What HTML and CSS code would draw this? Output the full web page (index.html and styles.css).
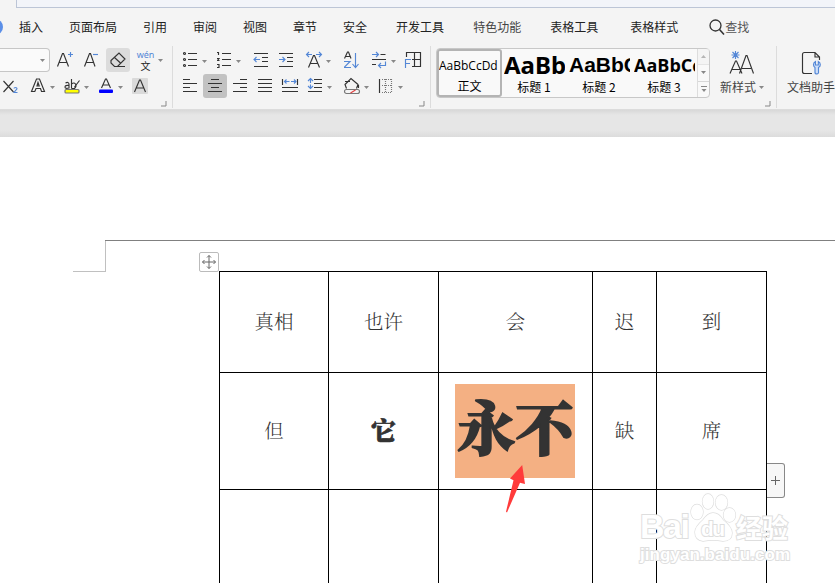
FILE: index.html
```
<!DOCTYPE html>
<html lang="zh-CN">
<head>
    <meta charset="UTF-8">
    <meta name="viewport" content="width=device-width, initial-scale=1.0">
    <title>文档</title>
    <link rel="stylesheet" href="styles.css">
</head>
<body>
    <div class="title-strip"></div>
    <nav class="tabs">
        <span class="tab-dot"></span>
        <span class="tab">插入</span>
        <span class="tab">页面布局</span>
        <span class="tab">引用</span>
        <span class="tab">审阅</span>
        <span class="tab">视图</span>
        <span class="tab">章节</span>
        <span class="tab">安全</span>
        <span class="tab wide">开发工具</span>
        <span class="tab wide soft">特色功能</span>
        <span class="tab wide">表格工具</span>
        <span class="tab wider">表格样式</span>
        <span class="search">
            <svg width="17" height="18" class="icon"><circle cx="7.500" cy="7.500" r="5.500" stroke-width="1.300"/><path d="M11.500 11.500l4.500 5" stroke-width="1.600"/></svg>
            查找
        </span>
    </nav>

    <div class="ribbon">
        <!-- Font -->
        <div class="group font-group">
            <div class="row">
                <div class="size-box"><svg width="5" height="3" class="arrow"><path d="M0 0h5l-2.500 3z"/></svg></div>
                <svg width="28" height="24" class="icon"><path d="M7.500 18.500l5-13h1l5 13M9.500 14.500h8"/><path class="blue" d="M18 6.500h5M20.500 4v5"/></svg>
                <svg width="28" height="24" class="icon"><path d="M6.500 18.500l5-13h1l4.500 13M8.500 14.500h7"/><path class="blue" d="M15 6.500h5"/></svg>
                <div class="btn light">
                    <svg width="24" height="24" class="icon"><path d="M5 12.500l8-7.500 6 6-7.500 7.500H8.500L5 15zM8.500 9.500l6.500 6M9 18.500h10"/></svg>
                </div>
                <div class="pinyin"><span class="wen">wén</span><span class="zi">文</span></div>
                <svg width="5" height="3" class="arrow"><path d="M0 0h5l-2.500 3z"/></svg>
            </div>
            <div class="row">
                <svg width="30" height="24" class="icon"><path d="M3.500 7l10 11M13.500 7l-10 11"/><path class="blue" d="M14 14.500q0-1 1.500-1t1.500 1.300L14 18.500h3.500"/></svg>
                <svg width="34" height="24" class="icon"><path d="M1.500 17.500L6.500 5h3l5 12.500h-3l-1-3H6l-1.200 3zM7 12l1-3.500L9.200 12z"/><path class="tri" d="M20 12h5l-2.500 3z"/></svg>
                <svg width="34" height="24" class="icon"><path d="M1.500 9q3-1.500 3.500 1v4.500M5 11.500q-4-.5-4 1.500t4 1M7.500 5v9.500M7.500 10q2.500-2 4 0t-1 4.500h-3M10.500 13l5-6.500"/><rect class="mark" x="1" y="15.500" width="14" height="3.500" rx="1"/><path class="tri" d="M20 12h5l-2.500 3z"/></svg>
                <svg width="34" height="24" class="icon"><path d="M3.500 14l4-9h1l4 9M5 11h6"/><rect class="ink" x="1" y="15.500" width="14" height="3.500" rx="1"/><path class="tri" d="M20 12h5l-2.500 3z"/></svg>
                <svg width="18" height="24" class="icon"><rect class="shade" x="0" y="4" width="16" height="16" rx="1"/><path d="M2.500 18l5-12h1l5 12M4.500 14h7"/></svg>
            </div>
            <svg width="6" height="6" class="launcher"><path d="M5 0v5H0"/></svg>
        </div>

        <!-- Paragraph -->
        <div class="group para-group">
            <div class="row">
                <svg width="34" height="24" class="icon"><circle cx="1.500" cy="5.500" r="1"/><circle cx="1.500" cy="11.500" r="1"/><circle cx="1.500" cy="17.500" r="1"/><path d="M5 5.500h9M5 11.500h9M5 17.500h9"/><path class="tri" d="M19 12h5l-2.500 3z"/></svg>
                <svg width="36" height="24" class="icon"><path d="M0 4.500h1.500V7M0 10.500h2l-1.500 2h2M0 16.500h2v3H0M5 5.500h9M5 11.500h9M5 17.500h9"/><path class="tri" d="M19 12h5l-2.500 3z"/></svg>
                <svg width="25" height="24" class="icon"><path d="M1 5.500h14M9 9.500h6M9 13.500h6M1 18.500h14"/><path class="blue" d="M1 11.500h6M3.500 9L1 11.500 3.500 14"/></svg>
                <svg width="27" height="24" class="icon"><path d="M1 5.500h14M9 9.500h6M9 13.500h6M1 18.500h14"/><path class="blue" d="M1 11.500h6M4.500 9L7 11.500 4.500 14"/></svg>
                <svg width="39" height="24" class="icon"><path d="M3.500 19.500l5-12h1l5 12M5.500 15.500h7"/><path class="blue" d="M1.500 6.500H7M11 6.500h5.500M4 4L1.500 6.500 4 9M14 4l2.500 2.500L14 9"/><path class="tri" d="M21 12h5l-2.500 3z"/></svg>
                <svg width="27" height="24" class="icon"><path d="M.5 10.500L3.500 4h1L7 10.500M1.500 8.500h4.500"/><path class="blue" d="M0 13.500h6l-6 6h7M11.500 5v14M8.500 16l3 3.500 3-3.500"/></svg>
                <svg width="33" height="24" class="icon"><path d="M9.500 6.500h5M1 11.500h14M1 16.500h4"/><path class="blue" d="M1 6.500h6M5 4l2.500 2.500L5 9M14.500 13.500v4H8M10 15l-2.500 2.500L10 20"/><path class="tri" d="M20 12h5l-2.500 3z"/></svg>
                <svg width="20" height="24" class="icon"><path d="M2.500 9V4.500h14v14H8M10.500 4.500v14M8 11.500h8"/><path class="blue" d="M1.500 20v-8.500H7M1.500 15.500H6"/></svg>
            </div>
            <div class="row">
                <svg width="20" height="24" class="icon"><path d="M0 5.500h7M0 9.500h14M0 13.500h7M0 17.500h14"/></svg>
                <div class="btn dark">
                    <svg width="24" height="24" class="icon"><path d="M8 5.500h8M5 9.500h14M8 13.500h8M5 17.500h14"/></svg>
                </div>
                <svg width="30" height="24" class="icon"><path d="M13 5.500h7M6 9.500h14M13 13.500h7M6 17.500h14"/></svg>
                <svg width="24" height="24" class="icon"><path d="M1 5.500h14M1 9.500h14M1 13.500h14M1 17.500h14"/></svg>
                <svg width="26" height="24" class="icon"><path d="M1.500 5v6M16.500 5v6M1 13.500h16M1 17.500h16"/><path class="blue" d="M3.500 7.500h5M10 7.500h5M5.500 5.500l-2 2 2 2M13 5.500l2 2-2 2"/></svg>
                <svg width="36" height="24" class="icon"><path d="M7 5.500h8M7 9.500h8M7 13.500h8M1 17.500h14"/><path class="blue" d="M3.500 4.500v4.500M3.500 10.500v4M1 7l2.500-2.500L6 7M1 12l2.500 2.500L6 12"/><path class="tri" d="M20 12h5l-2.500 3z"/></svg>
                <svg width="35" height="24" class="icon"><path d="M2 7.500h5M3.500 14.500L2 10.500l6-6 7 6-1.500 4M15.500 11v3"/><rect class="none" x="1.500" y="15.500" width="15" height="4" rx="2"/><path class="red" d="M7.500 19l5-3"/><path class="tri" d="M21 12h5l-2.500 3z"/></svg>
                <svg width="26" height="24" class="icon"><path d="M1.500 5v14"/><path class="dots" d="M4 5.500h10M4 11.500h10M4 18.500h10M7.500 5v14M13.500 5v14"/><path class="tri" d="M20 12h5l-2.500 3z"/></svg>
            </div>
            <svg width="6" height="6" class="launcher"><path d="M5 0v5H0"/></svg>
        </div>

        <!-- Styles -->
        <div class="group style-group">
            <div class="gallery">
                <div class="style-card selected"><span class="sample">AaBbCcDd</span><span class="name">正文</span></div>
                <div class="style-card"><span class="sample h1">AaBb</span><span class="name">标题 1</span></div>
                <div class="style-card"><span class="sample h2">AaBbC</span><span class="name">标题 2</span></div>
                <div class="style-card"><span class="sample h3">AaBbCc</span><span class="name">标题 3</span></div>
                <div class="scroller">
                    <span class="step off"><svg width="5" height="3" class="arrow"><path d="M0 3h5L2.500 0z"/></svg></span>
                    <span class="step"><svg width="5" height="3" class="arrow"><path d="M0 0h5l-2.500 3z"/></svg></span>
                    <span class="step"><svg width="6" height="6" class="arrow"><path d="M0 0h6v1H0zM.5 3h5L3 6z"/></svg></span>
                </div>
            </div>
            <div class="big-btn">
                <svg width="28" height="26" class="icon"><path d="M2 23.500L7.500 11h1l5.500 12.500M4 19.500h8.500M11.500 23.500L18 5.500h1l6.500 18M14 18.500h9"/><path class="blue" d="M7.500 1v8M3.500 5h8M4.500 2l6 6M10.500 2l-6 6"/></svg>
                <span class="label">新样式<svg width="5" height="3" class="arrow"><path d="M0 0h5l-2.500 3z"/></svg></span>
            </div>
            <svg width="6" height="6" class="launcher"><path d="M5 0v5H0"/></svg>
        </div>

        <div class="group help-group">
            <div class="big-btn">
                <svg width="24" height="26" class="icon"><path d="M13 23.500H5.500q-2 0-2-2v-17q0-2 2-2H16l4.500 4.500V10M16 2.500V7h4.500"/><path class="wrench" d="M16.500 11.500q-2 1-2 3.200 0 1.800 1.500 2.800v5.500q1.800 2 3.500 0v-5.500q1.800-1 1.800-2.800 0-2.200-2-3.200V15h-2.800z"/></svg>
                <span class="label">文档助手</span>
            </div>
        </div>
    </div>

    <div class="gutter"></div>

    <main class="page">
        <div class="margin-corner"></div>
        <div class="margin-top"></div>
        <div class="move-handle">
            <svg width="18" height="18"><path d="M9 2.500v13M2.500 9h13M7 4.500l2-2 2 2M7 13.500l2 2 2-2M4.500 7l-2 2 2 2M13.500 7l2 2-2 2"/></svg>
        </div>
        <table class="doc-table">
            <colgroup><col class="c1"><col class="c2"><col class="c3"><col class="c4"><col class="c5"></colgroup>
            <tr class="r1"><td>真相</td><td>也许</td><td>会</td><td>迟</td><td>到</td></tr>
            <tr class="r2"><td>但</td><td class="strong">它</td><td class="marked"><span class="highlight">永不</span></td><td>缺</td><td>席</td></tr>
            <tr class="r3"><td></td><td></td><td></td><td></td><td></td></tr>
        </table>
        <div class="add-col"><svg width="9" height="9"><path d="M4.500 0v9M0 4.500h9"/></svg></div>
        <svg class="pointer" width="20" height="49"><path d="M17.200 1L20 20l-5-1.300L2 48.500l-1-.8 7.500-31.400L5 14.500z"/></svg>
        <svg class="watermark" width="156" height="80">
            <text class="wm-big" x="2" y="48" textLength="50">Bai</text>
            <g class="paw">
                <ellipse cx="59" cy="22" rx="6" ry="7.500"/>
                <ellipse cx="70" cy="11.500" rx="5.500" ry="7.500"/>
                <ellipse cx="83.500" cy="12.500" rx="6" ry="7.500"/>
                <ellipse cx="91.500" cy="25" rx="6" ry="7"/>
                <path d="M75 23q6 0 10 7 9 7 9 13 0 8-9 8-10-2-20 0-8-1-8-9 0-5 8-12 5-7 10-7z"/>
            </g>
            <text class="wm-du" x="63" y="46" textLength="24">du</text>
            <text class="wm-cn" x="98" y="48" textLength="52">经验</text>
            <text class="wm-url" x="2" y="70" textLength="150">jingyan.baidu.com</text>
        </svg>
    </main>
</body>
</html>
```
FILE: styles.css
```
* {
    box-sizing: border-box;
}
body {
    margin: 0;
    height: 583px;
    overflow: hidden;
    background-color: #f4f4f4;
    font-family: "Noto Sans CJK SC", sans-serif;
    font-size: 12px;
    color: #222;
}
svg {
    display: block;
    flex: none;
}

/* Tabs */
.title-strip {
    height: 8px;
    margin-left: 16px;
    background-color: #f2f4f9;
    border-left: 1px solid #bcc5d6;
    border-bottom: 1px solid #bcc5d6;
}
.tabs {
    display: flex;
    align-items: center;
    height: 38px;
    line-height: 18px;
    white-space: nowrap;
    overflow: hidden;
}
.tab-dot {
    width: 16px;
    height: 16px;
    margin-left: -13px;
    margin-right: -10px;
    border-radius: 50%;
    background-color: #5b8fe8;
}
.tab {
    margin-left: 26px;
}
.tab.wide { margin-left: 29px; }
.tab.wider { margin-left: 32px; }
.tab.soft { color: #444; }
.search {
    display: flex;
    align-items: center;
    margin-left: 30px;
    color: #555;
}

/* Ribbon */
.ribbon {
    display: flex;
    height: 64px;
    border-bottom: 1px solid #dcdcdc;
}
.group {
    position: relative;
    flex: none;
    height: 62px;
    padding-top: 2px;
    border-right: 1px solid #dcdcdc;
}
.font-group { width: 173px; }
.para-group {
    width: 258px;
    padding-left: 10px;
}
.style-group {
    display: flex;
    width: 346px;
    padding-left: 5px;
}
.help-group {
    padding-left: 10px;
    border-right: none;
}
.row {
    display: flex;
    align-items: center;
    height: 24px;
    margin-bottom: 2px;
}
.size-box {
    display: flex;
    align-items: center;
    justify-content: flex-end;
    width: 50px;
    height: 24px;
    padding-right: 4px;
    background-color: #fafafa;
    border: 1px solid #c6c6c6;
    border-left: none;
    border-radius: 0 4px 4px 0;
}
.icon {
    fill: none;
    stroke: #333;
    stroke-width: 1.15;
}
.icon .blue { stroke: #5487d6; }
.icon .red { stroke: #e04040; }
.icon .tri {
    fill: #888;
    stroke: none;
}
.icon .mark {
    fill: #ffff00;
    stroke: #777;
}
.icon .ink {
    fill: #0000ff;
    stroke: none;
}
.icon .shade {
    fill: #dadada;
    stroke: none;
}
.icon .none { stroke: #777; }
.icon .dots {
    stroke: #777;
    stroke-dasharray: 1 1;
}
.icon .wrench {
    fill: #cfe0fa;
    stroke: #5487d6;
}
.arrow { fill: #888; }
.btn {
    height: 24px;
    border-radius: 3px;
}
.btn.light { background-color: #dcdcdc; }
.btn.dark { background-color: #c2c2c2; }
.pinyin {
    display: flex;
    flex-direction: column;
    align-items: center;
    width: 17px;
    margin: 0 4px 0 7px;
}
.wen {
    font-family: "Noto Sans", sans-serif;
    font-size: 9px;
    line-height: 12px;
    color: #5487d6;
}
.zi {
    font-size: 10px;
    line-height: 10px;
}
.launcher {
    position: absolute;
    right: 5px;
    bottom: 1px;
    fill: none;
    stroke: #888;
}

/* Style gallery */
.gallery {
    display: flex;
    width: 274px;
    height: 50px;
    background-color: #f9f9f9;
    border: 1px solid #c8c8c8;
    border-radius: 4px;
}
.style-card {
    display: flex;
    flex-direction: column;
    width: 65px;
    height: 48px;
    padding-left: 2px;
    color: #000;
    overflow: hidden;
}
.style-card.selected {
    padding-left: 0;
    border: 2px solid #b4b4b4;
    border-radius: 3px;
}
.sample {
    height: 29px;
    padding-top: 2px;
    line-height: 28px;
    font-family: "Noto Sans", sans-serif;
    white-space: nowrap;
    overflow: hidden;
    width: 61px;
}
.selected .sample {
    padding-top: 0;
    height: 28px;
    font-family: "Open Sans", sans-serif;
    font-size: 12px;
    line-height: 30px;
}
.sample.h1 { font-size: 24px; font-weight: bold; }
.sample.h2 { font-size: 21px; font-weight: bold; font-family: "Liberation Sans", sans-serif; }
.sample.h3 { font-size: 18px; font-weight: bold; font-family: "Open Sans", sans-serif; }
.name {
    line-height: 18px;
    text-align: center;
}
.style-card:not(.selected) .name {
    padding-right: 3px;
}
.scroller {
    display: flex;
    flex-direction: column;
    width: 12px;
    border-left: 1px solid #ddd;
}
.step {
    display: flex;
    flex: 1;
    align-items: center;
    justify-content: center;
    border-bottom: 1px solid #d8d8d8;
}
.step:last-child { border-bottom: none; }
.step.off {
    background-color: #f2f2f2;
    opacity: 0.6;
}
.big-btn {
    display: flex;
    flex-direction: column;
    align-items: center;
    height: 50px;
    padding-top: 2px;
    color: #444;
}
.style-group .big-btn {
    margin-left: 10px;
}
.label {
    display: flex;
    align-items: center;
    gap: 3px;
    line-height: 18px;
    margin-top: 2px;
    white-space: nowrap;
}

/* Document */
.gutter {
    height: 27px;
    background: linear-gradient(#d8d8d8, #e6e6e6 5px, #e6e6e6 20px, #dcdcdc);
}
.page {
    position: relative;
    height: 446px;
    padding: 134px 0 0 219px;
    background-color: #fff;
    overflow: hidden;
}
.margin-corner {
    position: absolute;
    left: 73px;
    top: 103px;
    width: 33px;
    height: 32px;
    border-right: 1px solid #c0c0c0;
    border-bottom: 1px solid #c0c0c0;
}
.margin-top {
    position: absolute;
    left: 105px;
    right: 0;
    top: 103px;
    height: 1px;
    background-color: #808080;
}
.move-handle {
    position: absolute;
    left: 199px;
    top: 115px;
    width: 20px;
    height: 20px;
    background-color: #fff;
    border: 1px solid #bbb;
    border-radius: 2px;
}
.move-handle svg,
.add-col svg {
    fill: none;
    stroke: #666;
}
.doc-table {
    width: 548px;
    table-layout: fixed;
    border-spacing: 0;
    border-right: 1px solid #000;
    font-family: "Noto Serif CJK SC", "Noto Sans CJK SC", serif;
}
.c1 { width: 109px; }
.c2 { width: 110px; }
.c3 { width: 154px; }
.c4 { width: 64px; }
.c5 { width: 110px; }
.r1 { height: 101px; }
.r2 { height: 117px; }
.r3 { height: 110px; }
.doc-table td {
    padding: 0 0 3px;
    border-left: 1px solid #000;
    border-top: 1px solid #000;
    text-align: center;
    font-size: 19.5px;
    line-height: 26px;
    font-weight: 300;
    color: #333;
}
.doc-table td.strong {
    padding-bottom: 5px;
    font-size: 25px;
    font-weight: 900;
    -webkit-text-stroke: 0.6px #333;
}
.doc-table td.marked {
    padding: 0 2px 0 0;
}
.highlight {
    display: block;
    width: 120px;
    height: 94px;
    margin: 0 auto;
    padding-left: 2px;
    background-color: #f4b083;
    font-size: 58px;
    font-weight: 900;
    line-height: 83px;
    -webkit-text-stroke: 1.8px #333;
}
.add-col {
    position: absolute;
    left: 767px;
    top: 326px;
    display: flex;
    align-items: center;
    justify-content: center;
    width: 18px;
    height: 35px;
    background-color: #f7f7f7;
    border: 1px solid #888;
    border-left: none;
    border-radius: 0 3px 3px 0;
}
.pointer {
    position: absolute;
    left: 505px;
    top: 327px;
    fill: #ff3b3b;
}
.watermark {
    position: absolute;
    left: 638px;
    top: 353px;
    fill: #fff;
    stroke: #dedede;
    stroke-width: 2px;
    paint-order: stroke;
    font-family: "Liberation Sans", "Noto Sans CJK SC", sans-serif;
    font-weight: bold;
}
.paw { stroke-width: 1.3px; }
.wm-big { font-size: 34px; }
.wm-du { font-size: 21px; }
.wm-cn { font-size: 26px; }
.wm-url { font-size: 17px; }
```
